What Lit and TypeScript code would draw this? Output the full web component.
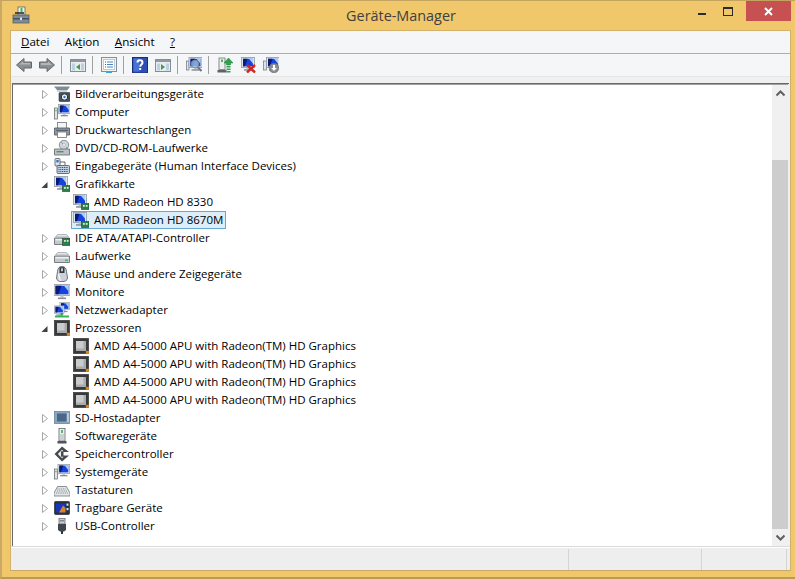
import { LitElement, html, css, svg } from "lit";
import { customElement } from "lit/decorators.js";

const mon = (x = 0, y = 0, s = 1) => svg`<g transform="translate(${x} ${y}) scale(${s})">
  <rect x=".5" y="0.5" width="13" height="10" fill="#dfe4e9" stroke="#8f99a3" stroke-width=".8"/>
  <rect x="2" y="1.800" width="10" height="7.500" fill="#1543dd"/><path d="M2 1.800h4.500L4 9.300H2z" fill="#0a1c78"/><path d="M8 1.800h4v5z" fill="#a9d0f4"/>
  <rect x="5.500" y="10.500" width="3" height="1.800" fill="#c0c5cb"/><rect x="3" y="12.200" width="8" height="1.500" fill="#868d95"/></g>`;
const chip = svg`<rect x="8.500" y="9.500" width="7.500" height="6" fill="#2e7d4f" stroke="#16462a" stroke-width=".6"/><rect x="10" y="11" width="1.800" height="1.800" fill="#d5f0d0"/><rect x="12.800" y="11" width="1.800" height="1.800" fill="#d5f0d0"/>`;
const drive = svg`<path d="M.5 8h15v6.500H.5z" fill="#c3c8cd" stroke="#5f656b" stroke-width=".8"/><path d="M1.500 7l2-2.500h9l2 2.500z" fill="#e4e7ea" stroke="#8b9197" stroke-width=".6"/><rect x="1.500" y="9" width="13" height="1.500" fill="#eef0f2"/>`;
const tower = svg`<rect x="0.500" y="4" width="3" height="11" fill="#dfe3e7" stroke="#5d6369" stroke-width=".7"/><rect x="1.400" y="6" width="1.200" height="1.200" fill="#39a852"/>`;

const icons: Record<string, unknown> = {
  camera: svg`<path d="M0 .5h16l-2.500 3.500H3z" fill="#7f8b95"/><path d="M3 4h10v1.800H3z" fill="#c5ccd2"/><rect x="5" y="6.500" width="11" height="9" rx="1" fill="#46535f" stroke="#2b343c" stroke-width=".6"/><circle cx="10.500" cy="11" r="3.200" fill="#eef4fa" stroke="#1f2831" stroke-width="1"/><circle cx="10.500" cy="11" r="1.200" fill="#3f6fb0"/>`,
  computer: svg`${tower}<g transform="translate(4 0) scale(.9)">${mon()}</g>`,
  printer: svg`<rect x="3.500" y=".5" width="9" height="6" fill="#f4f5f6" stroke="#6f757c" stroke-width=".8"/><path d="M.5 6h15v7H.5z" fill="#8e98a3" stroke="#4b535b" stroke-width=".8"/><rect x="3.500" y="10" width="9" height="5.500" fill="#fff" stroke="#6f757c" stroke-width=".8"/><rect x="2" y="7.800" width="12" height="1" fill="#4f5a63"/>`,
  dvd: svg`<circle cx="10" cy="5" r="4.700" fill="#cfd6dc" stroke="#6f7982" stroke-width=".8"/><circle cx="10" cy="5" r="1.400" fill="#fff" stroke="#8b949c" stroke-width=".5"/><path d="M7 2l2 2M12 7l1.500 1.500" stroke="#6fb07e"/><path d="M.5 9h15v6H.5z" fill="#bcc2c8" stroke="#5f656b" stroke-width=".8"/><rect x="2.500" y="11" width="7" height="1.400" fill="#3f9d56"/>`,
  hid: svg`<rect x="1" y="0.500" width="5" height="7.500" rx="1" fill="#dde2e7" stroke="#4b555e" stroke-width=".8"/><rect x="2.300" y="2" width="2.400" height="2.400" fill="#3f72b5"/><path d="M6 4h5v3" fill="none" stroke="#555" stroke-width=".9"/><rect x="3" y="7.500" width="12.500" height="8" rx="1" fill="#bfd0e2" stroke="#46515c" stroke-width=".8"/><path d="M4.500 9.500h9.500M4.500 11.500h9.500M4.500 13.500h9.500" stroke="#1e4f8e" stroke-dasharray="1 .8"/>`,
  adapter: svg`${mon()}${chip}`,
  ide: svg`${drive}<rect x="8.500" y="8.500" width="7.500" height="7" fill="#2e7d4f" stroke="#16462a" stroke-width=".6"/><rect x="10" y="10" width="1.800" height="1.800" fill="#d5f0d0"/><rect x="12.800" y="10" width="1.800" height="1.800" fill="#d5f0d0"/>`,
  drive: svg`${drive}<rect x="11" y="11.500" width="2.800" height="1.600" fill="#48b560"/>`,
  mouse: svg`<path d="M3.500 5.500C3.500 2 6 .3 8 .3s4.500 1.700 4.500 5.200l1 6.500c0 2.300-2.500 3.700-5.500 3.700S2.500 14.300 2.500 12z" fill="#ccd2d8" stroke="#4f575e" stroke-width=".8"/><path d="M5.500 1.200h5L10.500 7h-5z" fill="#2f363d"/><rect x="7.200" y="2.300" width="1.600" height="3" fill="#e8ecef"/><path d="M4.500 8c1 3 1 5 2 7" stroke="#f6f8fa" stroke-width="1.200" fill="none"/>`,
  monitor: svg`<rect x="0" y="0.500" width="16" height="11" fill="#dfe4e9" stroke="#8f99a3" stroke-width=".8"/><rect x="1.500" y="1.800" width="13" height="8.500" fill="#1543dd"/><path d="M1.500 1.800h6L4.500 10.300h-3z" fill="#0a1c78"/><path d="M10 1.800h4.500v5.500z" fill="#a9d0f4"/><rect x="6.500" y="11.500" width="3" height="2" fill="#c0c5cb"/><rect x="4" y="13.500" width="8" height="1.600" fill="#868d95"/>`,
  network: svg`<g transform="translate(5.500 0) scale(.74)">${mon()}</g><g transform="translate(0 3.500) scale(.74)">${mon()}</g><rect x="6.500" y="11" width="2.600" height="2.500" fill="#2fa84f"/><rect x="1" y="13.500" width="14" height="2" fill="#38b35a"/>`,
  cpu: svg`<rect x=".5" y=".5" width="15" height="15" fill="#37393b" stroke="#1f1f1f" stroke-width=".6"/><rect x="3" y="3" width="10" height="10" fill="#a9abac"/><rect x="3" y="3" width="7.500" height="7.500" fill="#c9cbcc"/><rect x="12.800" y="12.800" width="3" height="3" fill="#d98a1f"/>`,
  sd: svg`<rect x="0.500" y="1.500" width="15" height="12" fill="#8aa5bf" stroke="#6c8499" stroke-width=".8"/><rect x="3" y="3.500" width="9.500" height="8" fill="#4a6788"/><rect x="13.200" y="3" width="1.500" height="9" fill="#c6d3df"/>`,
  software: svg`<rect x="5" y=".5" width="6" height="12.500" fill="#eceeef" stroke="#5f656b" stroke-width=".8"/><rect x="7.100" y="2" width="1.800" height="3" fill="#4cb45f"/><path d="M7 6v6.500M9 6v6.500" stroke="#aeb3b8"/><rect x="3.500" y="13" width="9" height="2.500" fill="#4f555a"/>`,
  storage: svg`<path d="M8 .5l7 5.500H9.500v3.500H15L8 15.500 .5 8z" fill="#474b50"/><path d="M8 3.800L3.800 8 8 12.300l1.500-1.600H7V5.300h2.500z" fill="#eceef0"/>`,
  system: svg`<rect x="0.500" y="5" width="3" height="10" fill="#dfe3e7" stroke="#5d6369" stroke-width=".7"/><rect x="1.400" y="7" width="1.200" height="1.200" fill="#39a852"/><g transform="translate(3.500 0) scale(.9)">${mon()}</g>`,
  keyboard: svg`<path d="M3.500 4.500h9L16 11v3H0v-3z" fill="#e2e5e8" stroke="#6f777e" stroke-width=".8"/><path d="M3.500 7h9M3 9h10M2 11h12" stroke="#858c93" stroke-dasharray="1 .8"/>`,
  portable: svg`<rect x="0.500" y="1.500" width="15" height="13" rx="1" fill="#27313f" stroke="#15191f" stroke-width=".6"/><rect x="2" y="3.500" width="9.500" height="9" fill="#1836b8"/><path d="M5 12.500l4-7 2.500 2.500v4.500z" fill="#d9822a"/><rect x="12.500" y="3.500" width="2" height="2.200" fill="#d8dde2"/><rect x="12.500" y="8" width="2" height="2.200" fill="#d8dde2"/>`,
  usb: svg`<rect x="5" y=".3" width="6" height="5.700" fill="#c9cdd1" stroke="#64696f" stroke-width=".8"/><rect x="6.500" y="2" width="1" height="1.500" fill="#444"/><rect x="8.500" y="2" width="1" height="1.500" fill="#444"/><path d="M4 6h8v6l-2 1.500H6L4 12z" fill="#40464e"/><rect x="7" y="13" width="2" height="3" fill="#30353b"/>`,
};

type Row = { t: string; i: string; lvl?: number; open?: boolean; sel?: boolean };
const cpuName = "AMD A4-5000 APU with Radeon(TM) HD Graphics";
const rows: Row[] = [
  { t: "Bildverarbeitungsgeräte", i: "camera" },
  { t: "Computer", i: "computer" },
  { t: "Druckwarteschlangen", i: "printer" },
  { t: "DVD/CD-ROM-Laufwerke", i: "dvd" },
  { t: "Eingabegeräte (Human Interface Devices)", i: "hid" },
  { t: "Grafikkarte", i: "adapter", open: true },
  { t: "AMD Radeon HD 8330", i: "adapter", lvl: 1 },
  { t: "AMD Radeon HD 8670M", i: "adapter", lvl: 1, sel: true },
  { t: "IDE ATA/ATAPI-Controller", i: "ide" },
  { t: "Laufwerke", i: "drive" },
  { t: "Mäuse und andere Zeigegeräte", i: "mouse" },
  { t: "Monitore", i: "monitor" },
  { t: "Netzwerkadapter", i: "network" },
  { t: "Prozessoren", i: "cpu", open: true },
  { t: cpuName, i: "cpu", lvl: 1 },
  { t: cpuName, i: "cpu", lvl: 1 },
  { t: cpuName, i: "cpu", lvl: 1 },
  { t: cpuName, i: "cpu", lvl: 1 },
  { t: "SD-Hostadapter", i: "sd" },
  { t: "Softwaregeräte", i: "software" },
  { t: "Speichercontroller", i: "storage" },
  { t: "Systemgeräte", i: "system" },
  { t: "Tastaturen", i: "keyboard" },
  { t: "Tragbare Geräte", i: "portable" },
  { t: "USB-Controller", i: "usb" },
];

const win = (inner: unknown) => svg`<rect x=".5" y="2.500" width="15" height="12" fill="#e9edf1" stroke="#858e96"/><rect x="1" y="3" width="14" height="2" fill="#8f98a0"/><rect x="2" y="6.500" width="3" height="7" fill="#bcd0e2"/><rect x="11" y="6.500" width="3" height="7" fill="#bcd0e2"/>${inner}`;
const tools: Record<string, unknown> = {
  back: svg`<path d="M.5 8L8 1.500V5h7.500v6H8v3.500z" fill="#8c8f92" stroke="#65686b"/><path d="M3 8l4-3.500V6h7v1.500H3z" fill="#b4b7b9"/>`,
  fwd: svg`<path d="M15.500 8L8 1.500V5H.5v6H8v3.500z" fill="#8c8f92" stroke="#65686b"/><path d="M2 6h7V4.500L13 8H2z" fill="#b4b7b9"/>`,
  tree: win(svg`<path d="M6 10l4-3v6z" fill="#3f9e4e"/>`),
  props: svg`<rect x=".5" y=".5" width="15" height="14" fill="#f1f3f5" stroke="#858e96"/><rect x="2.500" y="2.500" width="11" height="10" fill="#fff" stroke="#c4c9ce"/><path d="M6 5h6M6 7.500h6M6 10h6" stroke="#4686c8"/><path d="M4 5h1M4 7.500h1M4 10h1" stroke="#2b5f9e"/><rect x="5" y="14" width="6" height="2" fill="#35a7e0"/>`,
  help: svg`<rect x=".5" y=".5" width="15" height="15.500" fill="#2d4fb4" stroke="#1a2f7c"/><rect x="1.500" y="1.500" width="6" height="13" fill="#4a72d6"/><path d="M5.500 5.500c0-3 5-3 5 0 0 2-2.300 2-2.300 4.300" fill="none" stroke="#fff" stroke-width="2"/><rect x="7.200" y="11" width="2" height="2" fill="#fff"/>`,
  action: win(svg`<path d="M6 7l4 3-4 3z" fill="#3f9e4e"/>`),
  scan: svg`<rect x="0.500" y="4" width="2.500" height="9" fill="#dfe3e7" stroke="#6d7379" stroke-width=".7"/><g transform="translate(2.500 0)">${mon()}</g><circle cx="9" cy="7" r="3.800" fill="#a8cdec" fill-opacity=".7" stroke="#7f8b96"/><path d="M11.500 10l4 4" stroke="#6e777f" stroke-width="2"/>`,
  update: svg`<rect x="2" y="1" width="6" height="11.500" fill="#eceeef" stroke="#6e747a" stroke-width=".8"/><rect x="4" y="2.500" width="2" height="2.500" fill="#4cb45f"/><rect x="0.500" y="13" width="9" height="2.500" fill="#5d6368"/><path d="M11.500 1l4.500 5h-2.500v2h-4V6H7z" fill="#2fa14c" stroke="#1b7a38" stroke-width=".5"/><path d="M9.500 9h4v1.500h-4zM9.500 11.500h4V13h-4zM9.500 14h4v1.500h-4z" fill="#2fa14c"/>`,
  disable: svg`<g transform="translate(1 0)">${mon()}</g><path d="M7 8l8 7.500M15 8l-8 7.500" stroke="#d8241c" stroke-width="2.400"/>`,
  install: svg`<rect x="0.500" y="4" width="3" height="9" fill="#dfe3e7" stroke="#6d7379" stroke-width=".7"/><g transform="translate(3 0)">${mon()}</g><circle cx="11" cy="11" r="4.800" fill="#8a8e92" stroke="#62666a" stroke-width=".6"/><path d="M10 8h2v3h1.800L11 14l-2.800-3H10z" fill="#fff"/>`,
};

const tb = (name: string) => html`<svg class="tool" viewBox="0 0 16 16">${tools[name]}</svg>`;

@customElement("app-root")
export class AppRoot extends LitElement {
  static styles = css`
    :host {
      display: flex;
      flex-direction: column;
      width: 795px;
      height: 579px;
      box-sizing: border-box;
      background: #f0c76b;
      border-top: 1px solid #c3a45f;
      border-left: 2px solid #c9a963;
      border-bottom: 2px solid #b99b58;
      font-family: "Open Sans", "Noto Sans", sans-serif;
      color: #000;
      overflow: hidden;
    }
    .title {
      height: 29px;
      flex: none;
      display: grid;
      grid-template-columns: 1fr auto 1fr;
    }
    .app-icon { width: 18px; height: 18px; margin: 5px 0 0 10px; }
    .title-text {
      font-size: 14.4px;
      color: #404040;
      padding-top: 5px;
      line-height: 20px;
      margin-left: 5px;
    }
    .controls { display: flex; justify-content: flex-end; padding-right: 4px; }
    .ctrl { width: 26px; height: 20px; display: flex; align-items: center; justify-content: center; }
    .min { width: 8px; height: 2px; background: #2b2b2b; margin-top: 6px; }
    .max { width: 8px; height: 6px; border: 1px solid #2b2b2b; border-top-width: 2px; }
    .close { width: 45px; background: #c75050; margin-left: 5px; }
    .close svg { width: 9px; height: 9px; }
    .client {
      flex: 1;
      min-height: 0;
      display: flex;
      flex-direction: column;
      margin: 0 4px 6px 8px;
      border: 1px solid #d2b26a;
      border-bottom-color: #c9a963;
      background: #f0f0f0;
    }
    .menu {
      height: 22px;
      flex: none;
      display: flex;
      background: #f5f6f7;
      border-bottom: 1px solid #adadad;
      font-size: 11.6px;
      line-height: 21px;
      padding-left: 10px;
      gap: 15.4px;
    }
    .toolbar {
      height: 22px;
      flex: none;
      display: flex;
      align-items: center;
      background: #f5f6f7;
      border-bottom: 1px solid #e6e6e6;
      padding-left: 1px;
    }
    .tool { width: 16px; height: 16px; margin: 0 3px 0 4px; flex: none; }
    .sep { width: 1px; height: 18px; background: #a0a0a0; margin: 0 4px 0 3px; flex: none; }
    .body {
      flex: 1;
      min-height: 0;
      margin: 6px 1px 0 1px;
      display: flex;
      background: #fff;
      border-top: 1px solid #696969;
      border-left: 1px solid #696969;
      box-shadow: inset 0 1px 0 #a0a0a0;
    }
    .tree { flex: 1; min-width: 0; padding-top: 1px; font-size: 11.5px; }
    .row { height: 18px; display: flex; align-items: center; padding-left: 28px; white-space: nowrap; }
    .row.lvl1 { padding-left: 47px; }
    .exp { width: 13px; height: 9px; flex: none; }
    .icon { width: 16px; height: 16px; flex: none; margin-right: 5px; }
    .label { line-height: 16px; }
    .sel { position: relative; }
    .sel::before {
      content: "";
      position: absolute;
      left: 58px;
      width: 153px;
      top: 0;
      height: 16px;
      border: 1px solid #62a8d1;
      background: #dceefa;
    }
    .sel > * { position: relative; }
    .scroll {
      width: 16px;
      flex: none;
      display: flex;
      flex-direction: column;
      background: #f0f0f0;
      margin-top: 1px;
    }
    .sb-btn { height: 17px; flex: none; display: flex; align-items: center; justify-content: center; }
    .sb-btn svg { width: 9px; height: 7px; }
    .track { flex: 1; display: flex; flex-direction: column; padding-top: 58px; }
    .thumb { flex: 1; background: #cdcdcd; }
    .gutter { width: 1px; flex: none; background: #f0f0f0; }
    .status {
      height: 23px;
      flex: none;
      border-top: 1px solid #d9d9d9;
      box-shadow: inset 0 1px 0 #fff;
      display: grid;
      grid-template-columns: 558px 133px 85px 1fr;
      background: #eeeeee;
    }
    .pane { border-right: 1px solid #d4d4d4; margin: 2px 0 0; }
    .pane:last-child { border: 0; }
    u { text-underline-offset: 1px; }
  `;

  render() {
    return html`
      <div class="title">
        <svg class="app-icon" viewBox="0 0 18 18">
          <rect x="6" y="1" width="7" height="8" fill="#eef0ea" stroke="#5d6a60" stroke-width=".8"/>
          <rect x="8.500" y="2" width="2" height="4" fill="#4eb060"/>
          <path d="M3 7h9" stroke="#2a2f33" stroke-width="1.600"/>
          <rect x="1" y="9" width="16" height="8" fill="#7d8c98" stroke="#56626c" stroke-width=".8"/>
          <rect x="1" y="12" width="16" height="1.500" fill="#47525b"/>
          <rect x="8" y="11.500" width="2" height="2.500" fill="#dfe3e6"/>
        </svg>
        <div class="title-text">Geräte-Manager</div>
        <div class="controls">
          <div class="ctrl"><div class="min"></div></div>
          <div class="ctrl"><div class="max"></div></div>
          <div class="ctrl close">
            <svg viewBox="0 0 9 9"><path d="M1 1l7 7M8 1L1 8" stroke="#fff" stroke-width="2"/></svg>
          </div>
        </div>
      </div>
      <div class="client">
        <div class="menu">
          <span><u>D</u>atei</span><span>Ak<u>t</u>ion</span><span><u>A</u>nsicht</span><span><u>?</u></span>
        </div>
        <div class="toolbar">
          ${tb("back")}${tb("fwd")}<div class="sep"></div>${tb("tree")}<div class="sep"></div>${tb("props")}<div class="sep"></div>${tb("help")}${tb("action")}<div class="sep"></div>${tb("scan")}<div class="sep"></div>${tb("update")}${tb("disable")}${tb("install")}
        </div>
        <div class="body">
          <div class="tree">
            ${rows.map(
              (r) => html`<div class="row ${r.lvl ? "lvl1" : ""} ${r.sel ? "sel" : ""}">
                <svg class="exp" viewBox="0 0 13 9">
                  ${r.lvl
                    ? null
                    : r.open
                      ? svg`<path d="M0.500 8h6V2z" fill="#404040"/>`
                      : svg`<path d="M1.500 .5l5 4-5 4z" fill="#fff" stroke="#a6a6a6"/>`}
                </svg>
                <svg class="icon" viewBox="0 0 16 16">${icons[r.i]}</svg>
                <span class="label">${r.t}</span>
              </div>`
            )}
          </div>
          <div class="scroll">
            <div class="sb-btn"><svg viewBox="0 0 9 7"><path d="M.5 5.500L4.500 1.500l4 4" fill="none" stroke="#606060" stroke-width="2"/></svg></div>
            <div class="track"><div class="thumb"></div></div>
            <div class="sb-btn"><svg viewBox="0 0 9 7"><path d="M.5 1.500L4.500 5.500l4-4" fill="none" stroke="#606060" stroke-width="2"/></svg></div>
          </div>
          <div class="gutter"></div>
        </div>
        <div class="status"><div class="pane"></div><div class="pane"></div><div class="pane"></div><div class="pane"></div></div>
      </div>
    `;
  }
}
